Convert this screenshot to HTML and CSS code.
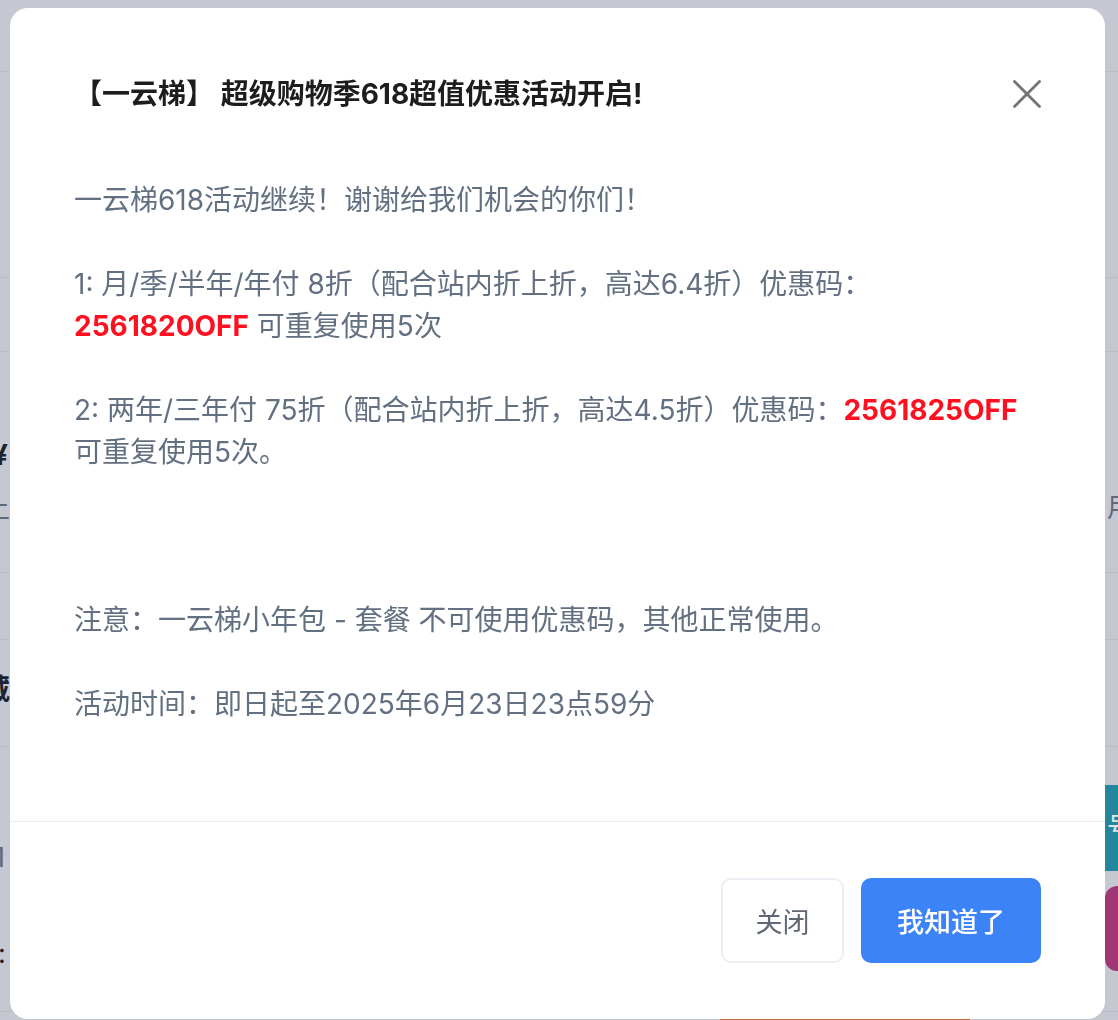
FILE: index.html
```html
<!DOCTYPE html>
<html lang="zh-CN">
<head>
<meta charset="utf-8">
<title>一云梯 618</title>
<link rel="stylesheet" href="styles.css">
</head>
<body>
<div class="page">
  <div class="row r1"></div>
  <div class="row r2"></div>
  <div class="row r3"></div>
  <div class="row r4">
    <div class="side-left"><span class="peek-bold yen">¥</span><span class="peek-grey shang">上</span></div>
    <div class="side-right"><span class="peek-grey yong">用</span></div>
  </div>
  <div class="row r5"></div>
  <div class="row r6">
    <div class="side-left"><span class="peek-bold cang">藏</span></div>
  </div>
  <div class="row r7">
    <div class="side-left"><span class="peek-grey one">1</span><span class="peek-dark colon">:</span></div>
    <div class="side-right tags">
      <span class="tag teal">号</span>
      <span class="tag magenta"></span>
    </div>
  </div>
  <div class="row r8"><span class="orange"></span></div>
</div>

<div class="overlay">
  <div class="modal">
    <div class="modal-header">
      <h2 class="modal-title">【一云梯】 超级购物季618超值优惠活动开启!</h2>
      <button class="close-btn" aria-label="关闭">
        <svg width="28" height="28" viewBox="0 0 28 28"><path d="M1.5 1.5 L26.5 26.5 M26.5 1.5 L1.5 26.5" stroke="#737373" stroke-width="2.8" fill="none" stroke-linecap="round"/></svg>
      </button>
    </div>
    <div class="modal-body">
      <p class="line">一云梯618活动继续！谢谢给我们机会的你们！</p>
      <p class="line blank"></p>
      <p class="line">1: 月/季/半年/年付 8折（配合站内折上折，高达6.4折）优惠码：</p>
      <p class="line"><strong class="code">2561820OFF</strong> 可重复使用5次</p>
      <p class="line blank"></p>
      <p class="line">2: 两年/三年付 75折（配合站内折上折，高达4.5折）优惠码：<strong class="code">2561825OFF</strong></p>
      <p class="line">可重复使用5次。</p>
      <p class="line blank"></p>
      <p class="line blank"></p>
      <p class="line blank"></p>
      <p class="line">注意：一云梯小年包 - 套餐 不可使用优惠码，其他正常使用。</p>
      <p class="line blank"></p>
      <p class="line">活动时间：即日起至2025年6月23日23点59分</p>
    </div>
    <div class="modal-footer">
      <button class="btn btn-secondary">关闭</button>
      <button class="btn btn-primary">我知道了</button>
    </div>
  </div>
</div>
</body>
</html>
```
FILE: styles.css
```css
* { box-sizing: border-box; }

html, body {
  margin: 0;
  padding: 0;
  height: 100%;
  overflow: hidden;
}

body {
  background: #c5c8d0;
  font-family: "Inter", "Noto Sans CJK SC", "Noto Sans", sans-serif;
}

/* background page (dimmed under overlay) */
.page {
  width: 100%;
}
.row {
  display: flex;
  justify-content: space-between;
  align-items: flex-start;
  border-bottom: 1px solid #b9bdc6;
}
.r1 { height: 72px; }
.r2 { height: 206px; }
.r3 { height: 74px; }
.r4 { height: 221px; }
.r5 { height: 67px; }
.r6 { height: 107px; }
.r7 { height: 265px; }
.r8 { height: 40px; border-bottom: none; padding-left: 720px; }

.side-left, .side-right {
  display: flex;
  flex-direction: column;
  align-items: flex-start;
}
.r4 .side-left { padding-top: 88px; gap: 24px; }
.r4 .side-right { padding-top: 141px; margin-right: -16px; }
.r6 .side-left { padding-top: 34px; }
.r7 .side-left { padding-top: 96px; gap: 66px; }

.yen { margin-left: -8px; }
.shang { margin-left: -17px; }
.cang { margin-left: -18px; }
.one { margin-left: -6px; }
.colon { margin-left: -2px; }

.peek-bold {
  font-size: 28px;
  font-weight: 700;
  color: #1c2230;
  line-height: 30px;
}
.peek-grey {
  font-size: 27px;
  color: #5e6878;
  line-height: 30px;
}
.peek-dark {
  font-size: 27px;
  color: #1c2230;
  line-height: 30px;
}

.tags {
  padding-top: 38px;
  gap: 15px;
  margin-right: -60px;
}
.tag {
  display: block;
  width: 73px;
  color: #dfe6ea;
  font-size: 27px;
  line-height: 86px;
  padding-left: 2px;
}
.teal { background: #24869c; height: 86px; }
.magenta { background: #a23675; height: 85px; border-radius: 12px; }

.orange {
  display: block;
  margin-top: 6px;
  width: 250px;
  height: 4px;
  background: #c06a37;
}

/* overlay + modal */
.overlay {
  position: fixed;
  inset: 0;
  padding: 8px 13px 1px 10px;
  display: flex;
}
.modal {
  flex: 1;
  display: flex;
  flex-direction: column;
  background: #ffffff;
  border-radius: 18px;
  overflow: hidden;
}

.modal-header {
  display: flex;
  align-items: center;
  justify-content: space-between;
  padding: 65px 64px 0 64px;
}
.modal-title {
  margin: 0;
  font-size: 28px;
  line-height: 42px;
  font-weight: 700;
  color: #1d1d1f;
}
.close-btn {
  width: 28px;
  height: 28px;
  padding: 0;
  border: none;
  background: none;
  display: flex;
  cursor: pointer;
}

.modal-body {
  flex: 1;
  padding: 64px 64px 0 64px;
  font-size: 28px;
  line-height: 42px;
  color: #637081;
}
.line {
  margin: 0;
  white-space: nowrap;
  height: 42px;
}
.code {
  color: #ff1020;
  font-weight: 700;
}

.modal-footer {
  border-top: 1px solid #ecedf2;
  padding: 56px 64px;
  display: flex;
  justify-content: flex-end;
  gap: 17px;
}
.btn {
  font-family: inherit;
  font-size: 27px;
  height: 85px;
  border-radius: 10px;
  cursor: pointer;
}
.btn-secondary {
  width: 123px;
  background: #ffffff;
  border: 2px solid #eceef3;
  color: #5f6775;
}
.btn-primary {
  width: 180px;
  background: #3d83f8;
  border: none;
  color: #ffffff;
  font-weight: 500;
}
```
